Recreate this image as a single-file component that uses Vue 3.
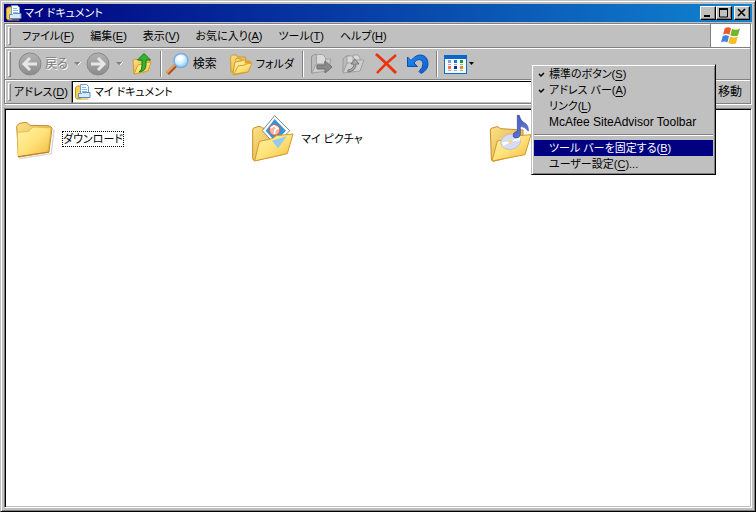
<script setup>
import { ref } from 'vue'

const menus = [
  { text: 'ファイル', key: 'F' },
  { text: '編集', key: 'E' },
  { text: '表示', key: 'V' },
  { text: 'お気に入り', key: 'A' },
  { text: 'ツール', key: 'T' },
  { text: 'ヘルプ', key: 'H' },
]
const popup = [
  { text: '標準のボタン', key: 'S', checked: true },
  { text: 'アドレス バー', key: 'A', checked: true },
  { text: 'リンク', key: 'L' },
  { text: 'McAfee SiteAdvisor Toolbar', wide: true },
  { separator: true },
  { text: 'ツール バーを固定する', key: 'B', active: true },
  { text: 'ユーザー設定', key: 'C', tail: '...' },
]
const address = ref('マイ ドキュメント')
</script>

<template>
  <div class="window">
    <svg class="defs" width="0" height="0" aria-hidden="true">
      <defs>
        <linearGradient id="fold" x1="0" y1="0" x2="1" y2="1">
          <stop offset="0" stop-color="#fff3a8" /><stop offset="0.5" stop-color="#ffe27a" /><stop offset="1" stop-color="#f0b93c" />
        </linearGradient>
        <linearGradient id="back" x1="0" y1="0" x2="1" y2="1">
          <stop offset="0" stop-color="#fbe287" /><stop offset="1" stop-color="#dca738" />
        </linearGradient>
        <linearGradient id="ball" x1="0" y1="0" x2="0" y2="1">
          <stop offset="0" stop-color="#b2b2b2" /><stop offset="1" stop-color="#8b8b8b" />
        </linearGradient>
        <radialGradient id="lens" cx="0.4" cy="0.35" r="0.7">
          <stop offset="0" stop-color="#ffffff" /><stop offset="0.5" stop-color="#d3f2ff" /><stop offset="1" stop-color="#7fc4f5" />
        </radialGradient>
        <linearGradient id="undo" x1="0" y1="0" x2="1" y2="1">
          <stop offset="0" stop-color="#1c8cf0" /><stop offset="1" stop-color="#1559c8" />
        </linearGradient>
        <linearGradient id="note" x1="0" y1="0" x2="1" y2="1">
          <stop offset="0" stop-color="#3e53b8" /><stop offset="1" stop-color="#7084dc" />
        </linearGradient>
        <symbol id="docs" viewBox="0 0 16 16">
          <path d="M.5 3.500l2-1.500h3v12.500h-4l-1-1z" fill="#f6cf59" stroke="#c98f1c" />
          <path d="M5.500.5h6l2 2v9h-8z" fill="#fff" stroke="#6e9fd0" />
          <path d="M7 3.500h4M7 5.500h5M7 7.500h5" stroke="#8ab8e8" />
          <path d="M3.500 13.500v-4h3l1-1h7.500v5z" fill="#d5eafa" stroke="#5a8dc4" />
          <path d="M1.500 15h12" stroke="#d79f2a" />
        </symbol>
      </defs>
    </svg>

    <header class="title">
      <svg class="small-icon"><use href="#docs" /></svg>
      <h1>マイ ドキュメント</h1>
      <button class="caption" aria-label="最小化"><svg viewBox="0 0 12 10"><path d="M2 8h6" stroke="#000" stroke-width="2" /></svg></button>
      <button class="caption" aria-label="最大化"><svg viewBox="0 0 12 10"><path d="M1.500 1v8h8V1" fill="none" stroke="#000" /><path d="M1 1h9" stroke="#000" stroke-width="2" /></svg></button>
      <button class="caption close" aria-label="閉じる"><svg viewBox="0 0 12 10"><path d="M2 1l7 7M9 1L2 8" stroke="#000" stroke-width="1.600" /></svg></button>
    </header>

    <div class="rebar">
      <div class="band menu-band">
        <span class="grip"></span>
        <nav class="menus">
          <button v-for="m in menus" :key="m.key">{{ m.text }}(<u>{{ m.key }}</u>)</button>
        </nav>
        <div class="brand">
          <svg viewBox="0 0 60 56" width="20" height="19" aria-hidden="true">
            <path d="M11 7Q21 0 30 6L25 26Q16 20 6 26Z" fill="#ee5a2b" />
            <path d="M33 8Q44 14 57 7L51 28Q40 33 28 27Z" fill="#72b62b" />
            <path d="M5 30Q15 24 24 30L19 49Q10 43 0 49Z" fill="#3f82df" />
            <path d="M27 31Q39 37 50 32L45 51Q34 57 22 50Z" fill="#f8bd22" />
          </svg>
        </div>
      </div>

      <div class="band tool-band">
        <span class="grip"></span>
        <button class="tool labelled kanji off" disabled>
          <svg viewBox="0 0 24 24"><circle cx="12" cy="12" r="11" fill="url(#ball)" stroke="#888" /><path d="M19 12H7M12 6l-6 6 6 6" fill="none" stroke="#e6e6e6" stroke-width="3" /></svg>
          <span>戻る</span>
        </button>
        <button class="drop off" disabled aria-label="戻る履歴"><svg viewBox="0 0 7 4"><path d="M0 0h6L3 3z" fill="#808080" /><path d="M4 3l3-3" stroke="#fff" /></svg></button>
        <button class="tool labelled off" disabled aria-label="進む">
          <svg viewBox="0 0 24 24"><circle cx="12" cy="12" r="11" fill="url(#ball)" stroke="#888" /><path d="M5 12h12M12 6l6 6-6 6" fill="none" stroke="#e6e6e6" stroke-width="3" /></svg>
        </button>
        <button class="drop off" disabled aria-label="進む履歴"><svg viewBox="0 0 7 4"><path d="M0 0h6L3 3z" fill="#808080" /><path d="M4 3l3-3" stroke="#fff" /></svg></button>
        <button class="tool up" aria-label="上へ">
          <svg viewBox="0 0 24 24">
            <path d="M3 8l2-1 4 1 1 1 10-1-2 11-14 3z" fill="url(#back)" stroke="#d49a28" />
            <path d="M4 22l4-9 5-1 1-1 7-1-3 9z" fill="url(#fold)" stroke="#d9a02c" />
            <path d="M9 20q3-2 3-6V8H7.500L14 1.500 20.500 8H16v5q0 6-7 7z" fill="#35b52d" stroke="#137b18" />
          </svg>
        </button>
        <span class="rule"></span>
        <button class="tool labelled kanji">
          <svg viewBox="0 0 24 24"><path d="M1.500 21.500l8-8" stroke="#9d5929" stroke-width="4" /><path d="M1 20.500l8-8" stroke="#f3a05a" stroke-width="2" /><circle cx="15" cy="8.500" r="7" fill="url(#lens)" stroke="#79a9e6" stroke-width="1.500" /><ellipse cx="14" cy="6" rx="3.500" ry="2.500" fill="#fff" opacity=".8" /></svg>
          <span>検索</span>
        </button>
        <button class="tool labelled">
          <svg viewBox="0 0 24 24">
            <path d="M1.500 5l2-2h4l1 2h8v13L2 20z" fill="url(#back)" stroke="#d49a28" />
            <path d="M6 8l2-2 4 1 1 2h8v3" fill="url(#back)" stroke="#d49a28" />
            <path d="M4 21l2-11 6-1 2-1h3l-1 3 6-1-3 10-15 3z" fill="url(#fold)" stroke="#d49a28" />
            <path d="M5 22l4-8 7-1 1-1 6-1-4 9z" fill="url(#fold)" stroke="#d9a02c" />
          </svg>
          <span>フォルダ</span>
        </button>
        <span class="rule"></span>
        <button class="tool off" disabled aria-label="移動先">
          <svg viewBox="0 0 24 24"><path d="M1.500 21V4.500l3-2h3V20z" fill="#bcbcbc" stroke="#929292" /><path d="M6.500 2.500h6l3 3v12h-9z" fill="#dadada" stroke="#a3a3a3" /><path d="M2 21l4-9h8l2-5h5l-3 12z" fill="#cecece" stroke="#a0a0a0" /><path d="M7 13h8V9l7 6-7 6v-4H7z" fill="#8b8b8b" stroke="#6f6f6f" /></svg>
        </button>
        <button class="tool off" disabled aria-label="コピー先">
          <svg viewBox="0 0 24 24"><path d="M1 20V7l3-3h5v16z" fill="#bbb" stroke="#999" /><path d="M5 4h5l3 3v10H5zM11 3h5l2 3v9h-7z" fill="#dadada" stroke="#a0a0a0" /><path d="M1 21l4-10h7l2-3h8l-4 11z" fill="#cecece" stroke="#a0a0a0" /><path d="M6 18q6-1 6-6H9l4-5 4 5h-3q0 7-8 8z" fill="#aaa" stroke="#777" /></svg>
        </button>
        <button class="tool" aria-label="削除">
          <svg viewBox="0 0 24 24"><path d="M2 2q9 8 20 19" fill="none" stroke="#ed3209" stroke-width="3" /><path d="M22 3Q11 12 3 21" fill="none" stroke="#ed3209" stroke-width="2.500" /></svg>
        </button>
        <button class="tool" aria-label="元に戻す">
          <svg viewBox="0 0 24 24"><path d="M1.500 5L5 8.500Q10 2.500 15 3q7 1 7 9 0 6-7 9.500l-2-2q4-4 4-8 0-4-4-4-3 0-5 3.500l3.500 3.500h-10z" fill="url(#undo)" stroke="#0b4fb5" /></svg>
        </button>
        <span class="rule"></span>
        <button class="tool views" aria-label="表示">
          <svg viewBox="0 0 24 24">
            <rect x=".5" y="3.500" width="22" height="18" fill="#f4f8fc" stroke="#0870d0" /><path d="M0 5h23" stroke="#0866d0" stroke-width="4" />
            <g shape-rendering="crispEdges"><path fill="#9492ca" d="M4 8h3v3H4z" /><path fill="#0878d8" d="M10 8h3v3h-3z" /><path fill="#1c9a28" d="M16 8h3v3h-3z" /><path fill="#ff7047" d="M4 14h3v3H4z" /><path fill="#0830a0" d="M10 14h3v3h-3z" /><path fill="#d09800" d="M16 14h3v3h-3z" /><path d="M4 12.500h3m3 0h3m3 0h3M4 18.500h3m3 0h3m3 0h3" stroke="#aaa" /></g>
          </svg>
          <svg class="tri" viewBox="0 0 7 4"><path d="M1 0h5L3.500 3z" fill="#000" /></svg>
        </button>
      </div>

      <div class="band address-band">
        <span class="grip"></span>
        <label for="address">アドレス(<u>D</u>)</label>
        <div class="field">
          <svg class="small-icon"><use href="#docs" /></svg>
          <input id="address" v-model="address" type="text" />
        </div>
        <button class="go kanji">移動</button>
      </div>
    </div>

    <main class="content">
      <button class="item">
        <svg viewBox="30 27 144 156">
          <path d="M58 164l96-15 8-73" fill="none" stroke="#bbb" stroke-width="4" opacity=".6" />
          <path d="M50 68q2-8 10-10l15-3q8 0 15 9l54 1q10 1 12 8l-9 71-91 15z" fill="url(#back)" stroke="#c88c2c" stroke-width="3" />
          <path d="M52 89q0-4 6-4l28-3 9-10q3-3 8-3l50 3-9 73-90 14z" fill="url(#fold)" stroke="#dfad43" stroke-width="2" />
          <path d="M54 158l93-14" stroke="#b7791f" stroke-width="3" />
        </svg>
        <span class="focused">ダウンロード</span>
      </button>
      <button class="item">
        <svg viewBox="24 27 144 156">
          <path d="M38 77q0-5 6-6l13-4q6 0 10 5l68 8v70l-91 20q-6-1-6-8z" fill="url(#back)" stroke="#c88c2c" stroke-width="3" />
          <path d="M104 35l45 45-42 44-40-44z" fill="#fff" stroke="#888" stroke-width="3" />
          <path d="M104 45l34 35-32 33-29-33z" fill="#3096df" />
          <circle cx="104" cy="78" r="16" fill="#f4b5a1" stroke="#db5b3c" stroke-width="3" /><path d="M92 72l10-7 11 8-8 5-2 12" fill="none" stroke="#fff" stroke-width="5" />
          <path d="M44 171l14-59 39-8 12-9 50-5-17 59z" fill="url(#fold)" stroke="#d49a2d" stroke-width="3" />
          <path d="M96 110l45-13-27 36z" fill="#93cbed" />
        </svg>
        <span>マイ ピクチャ</span>
      </button>
      <button class="item" aria-label="マイ ミュージック">
        <svg viewBox="18 177 144 156">
          <path d="M31 228q0-5 6-6l14-4q6 0 10 6l68 4v72l-89 22q-6-2-6-8z" fill="url(#back)" stroke="#c88c2c" stroke-width="3" />
          <path d="M36 321l16-60 38-6 12-9 51-4-18 60z" fill="url(#fold)" stroke="#d49a2d" stroke-width="3" />
          <ellipse cx="92" cy="263" rx="30" ry="23" fill="#d8dcf2" stroke="#b5b3d0" stroke-width="2" transform="rotate(-12 92 263)" /><path d="M92 263l25-16 5 12zM92 263l-27 1 5 13z" fill="#fff" /><circle cx="92" cy="263" r="6" fill="#f5d98a" />
          <path d="M112 184h6q3 17 19 25 9 7 8 22-10-14-24-14v25q-3 11-15 10-9-2-6-12 4-8 12-8z" fill="url(#note)" stroke="#34459b" stroke-width="2" />
        </svg>
      </button>
    </main>

    <div class="popup" role="menu">
      <template v-for="(p, i) in popup" :key="i">
        <hr v-if="p.separator" />
        <button v-else role="menuitem" :class="{ active: p.active, wide: p.wide }">
          <span class="check"><svg v-if="p.checked" viewBox="0 0 7 7" width="7" height="7"><path d="M1 3l2 2 3-3" fill="none" stroke="#000" stroke-width="1.500" /></svg></span>
          <span>{{ p.text }}<template v-if="p.key">(<u>{{ p.key }}</u>)</template>{{ p.tail }}</span>
        </button>
      </template>
    </div>
  </div>
</template>

<style>
body {
  margin: 0;
}
</style>

<style scoped>
.window {
  position: relative;
  box-sizing: border-box;
  min-height: 100vh;
  display: flex;
  flex-direction: column;
  padding: 3px;
  border: 1px solid;
  border-color: #c0c0c0 #000 #000 #c0c0c0;
  box-shadow: inset 1px 1px #fff, inset -1px -1px #808080;
  background: #c0c0c0;
  color: #000;
  font: 11px/16px "Liberation Sans", "Noto Sans CJK JP", sans-serif;
  font-feature-settings: "palt";
}
.defs {
  position: absolute;
}
button {
  border: 0;
  padding: 0;
  background: none;
  color: inherit;
  font: inherit;
  font-feature-settings: inherit;
  white-space: nowrap;
}
u {
  text-underline-offset: 2px;
}
svg {
  display: block;
  flex: none;
}
.small-icon {
  width: 16px;
  height: 16px;
}
.title {
  height: 18px;
  display: flex;
  align-items: center;
  padding: 0 2px;
  background: linear-gradient(90deg, #000080, #1084d0);
  color: #fff;
}
.title h1 {
  flex: 1;
  margin: 0 0 0 2px;
  font: inherit;
}
.caption {
  box-sizing: border-box;
  width: 16px;
  height: 14px;
  padding: 1px;
  border: 1px solid;
  border-color: #fff #000 #000 #fff;
  box-shadow: inset -1px -1px #808080;
  background: #c0c0c0;
}
.caption svg {
  width: 12px;
  height: 10px;
}
.close {
  margin-left: 2px;
}
.rebar {
  margin: 1px 1px 0 0;
  border: 1px solid #808080;
  box-shadow: 1px 1px #fff;
}
.band {
  display: flex;
  align-items: center;
  box-shadow: inset 1px 1px #fff;
  padding-left: 3px;
}
.band + .band {
  border-top: 1px solid #808080;
}
.menu-band,
.address-band {
  height: 23px;
}
.tool-band {
  height: 31px;
}
.grip {
  box-sizing: border-box;
  align-self: stretch;
  width: 3px;
  margin: 3px 3px 2px 0;
  border: 1px solid;
  border-color: #fff #808080 #808080 #fff;
}
.tool-band .grip {
  margin-right: 5px;
}
.menus {
  flex: 1;
  display: flex;
  gap: 16px;
  padding-left: 8px;
}
.brand {
  align-self: stretch;
  width: 39px;
  display: grid;
  place-items: center;
  border-left: 1px solid #808080;
  background: #fff;
}
.tool {
  display: flex;
  align-items: center;
  gap: 3px;
  padding: 0 4px;
}
.tool svg {
  width: 24px;
  height: 24px;
}
.labelled {
  padding: 0 6px 0 2px;
}
.labelled + .labelled {
  margin-left: 4px;
}
.kanji {
  font-size: 12px;
}
.off {
  color: #808080;
  text-shadow: 1px 1px #fff;
}
.drop {
  width: 10px;
}
.drop svg,
.tool .tri {
  width: 7px;
  height: 4px;
}
.views {
  gap: 0;
}
.rule {
  align-self: stretch;
  width: 1px;
  margin: 3px 2px 2px;
  border-left: 1px solid #808080;
  background: #fff;
}
.field {
  flex: 1;
  align-self: stretch;
  display: flex;
  align-items: center;
  gap: 3px;
  margin: 1px 0 0 4px;
  padding-left: 2px;
  background: #fff;
  border: 1px solid;
  border-color: #000 #c0c0c0 #c0c0c0 #000;
  box-shadow: -1px 0 #808080;
}
.field input {
  flex: 1;
  min-width: 0;
  padding: 0;
  border: 0;
  outline: 0;
  background: none;
  color: inherit;
  font: inherit;
  font-feature-settings: inherit;
}
.go {
  padding: 0 8px 0 32px;
}
.content {
  flex: 1;
  display: grid;
  grid-template-columns: repeat(auto-fill, 238px);
  align-content: start;
  margin-top: 4px;
  padding: 4px;
  border: 1px solid;
  border-color: #808080 #fff #fff #808080;
  box-shadow: inset 1px 1px #000, inset -1px -1px #c0c0c0;
  background: #fff;
}
.item {
  display: flex;
  align-items: center;
  gap: 4px;
  padding-left: 1px;
}
.item svg {
  width: 48px;
  height: 52px;
}
.item span {
  line-height: 14px;
  border: 1px solid transparent;
}
.item .focused {
  border: 1px dotted #000;
}
.popup {
  position: absolute;
  left: 530px;
  top: 63px;
  box-sizing: border-box;
  min-width: 185px;
  padding: 1px 2px 2px;
  border: 1px solid;
  border-color: #c0c0c0 #000 #000 #c0c0c0;
  box-shadow: inset 1px 1px #fff, inset -1px -1px #808080;
  background: #c0c0c0;
}
.popup button {
  width: 100%;
  display: flex;
  align-items: center;
}
.popup .wide {
  font-size: 12px;
}
.popup .active {
  background: #000080;
  color: #fff;
}
.check {
  width: 15px;
  display: grid;
  place-items: center;
}
.popup hr {
  margin: 4px 0;
  border: 0;
  border-top: 1px solid #808080;
  border-bottom: 1px solid #fff;
}
</style>
